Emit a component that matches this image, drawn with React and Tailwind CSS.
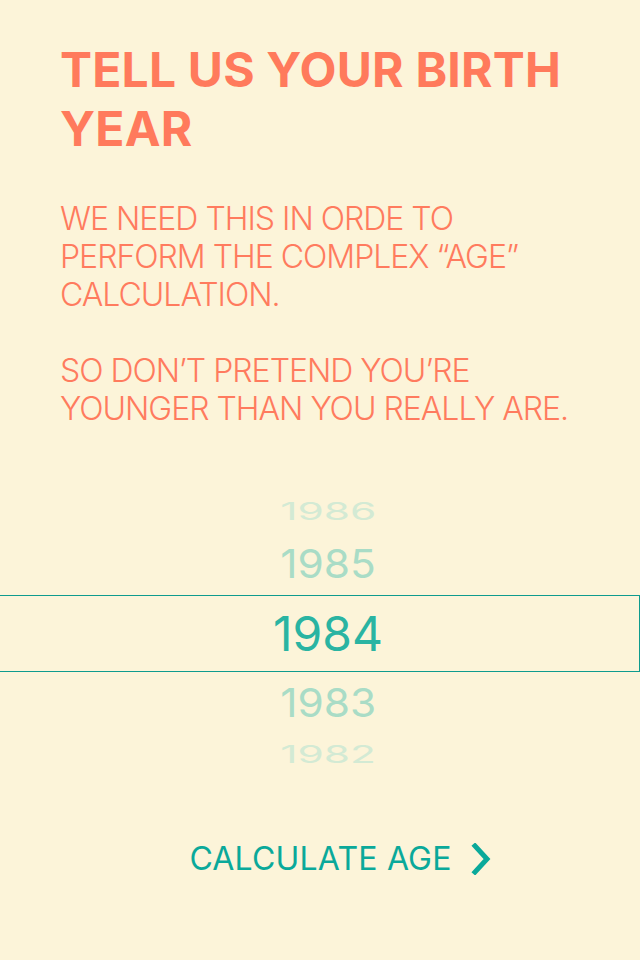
const YEARS = [
  { year: 1986, cls: "text-[40px] text-[#d3ead4] scale-y-[0.6] scale-x-[1.06]" },
  { year: 1985, cls: "text-[40px] text-[#a9dcc6] scale-x-[1.06]" },
];

const YEARS_BELOW = [
  { year: 1983, cls: "text-[40px] text-[#a9dcc6] scale-x-[1.06]" },
  { year: 1982, cls: "text-[40px] text-[#d3ead4] scale-y-[0.6] scale-x-[1.06]" },
];

function YearRow({ year, cls }) {
  return (
    <div className="h-[52px] pl-[16px] flex items-center justify-center">
      <span className={`leading-none ${cls}`}>{year}</span>
    </div>
  );
}

export default function App() {
  return (
    <div className="w-[640px] h-[960px] bg-[#fcf4d9] overflow-hidden font-['Inter',sans-serif]">
      <div className="pl-[60px] pr-[40px] pt-[40px]">
        <h1 className="text-[48px] leading-[59px] font-bold tracking-[0.2px] text-[#ff7a5c]">
          TELL US YOUR BIRTH YEAR
        </h1>
        <div className="mt-[42px] text-[32px] leading-[38px] font-light tracking-[-1px] text-[#ff7b5e]">
          <p>
            WE NEED THIS IN ORDE TO
            <br />
            PERFORM THE COMPLEX “AGE”
            <br />
            CALCULATION.
          </p>
          <p className="mt-[38px]">
            SO DON’T PRETEND YOU’RE
            <br />
            YOUNGER THAN YOU REALLY ARE.
          </p>
        </div>
      </div>

      <div className="mt-[58px] flex flex-col">
        {YEARS.map((y) => (
          <YearRow key={y.year} {...y} />
        ))}
        <div className="mt-[5px] h-[77px] border border-[#0e9b8e] ml-[-1px] pl-[17px] flex items-center justify-center">
          <span className="text-[48px] leading-none text-[#2ab4a2]">1984</span>
        </div>
        <div className="mt-[5px]">
          {YEARS_BELOW.map((y) => (
            <YearRow key={y.year} {...y} />
          ))}
        </div>
      </div>

      <div className="mt-[62px] flex items-center justify-center gap-[19px] pl-[40px]">
        <span className="text-[32px] leading-none tracking-[0.2px] text-[#0aa99a]">CALCULATE AGE</span>
        <svg width="20" height="32" viewBox="0 0 20 32" fill="none">
          <path d="M4 3 L16 16 L4 29" stroke="#0aa99a" strokeWidth="5" strokeLinecap="square" />
        </svg>
      </div>
    </div>
  );
}
